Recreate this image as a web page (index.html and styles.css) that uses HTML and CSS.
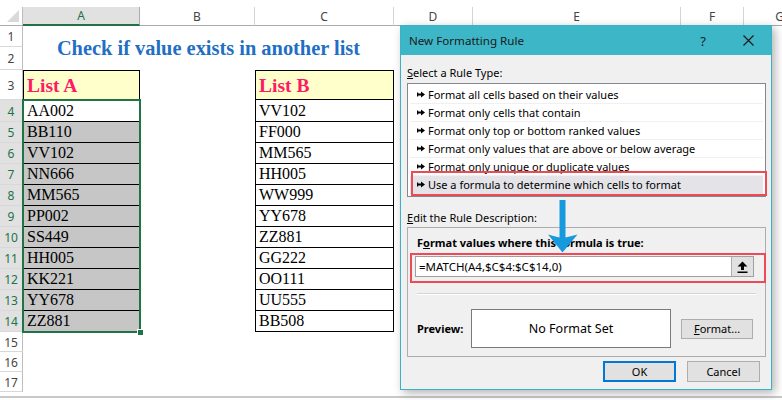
FILE: index.html
```html
<!DOCTYPE html>
<html>
<head>
<meta charset="utf-8">
<link rel="stylesheet" href="styles.css">
</head>
<body>
<div class="sheet">
  <div class="grid">
    <div class="corner"><svg width="14" height="13" viewBox="0 0 14 13"><polygon points="13,0 13,12 1,12" fill="#D9D9D9"/></svg></div>
    <div class="ch sel">A</div><div class="ch">B</div><div class="ch">C</div><div class="ch">D</div><div class="ch">E</div><div class="ch">F</div><div class="ch">G</div>

    <div class="rh">1</div>
    <div class="title">Check if value exists in another list</div>
    <div class="rh">2</div>
    <div class="rh">3</div>
    <div class="cell a hdr first">List A</div>
    <div class="cell c hdr first">List B</div>

    <div class="rh on">4</div><div class="cell a">AA002</div><div class="cell c">VV102</div>
    <div class="rh on">5</div><div class="cell a shade">BB110</div><div class="cell c">FF000</div>
    <div class="rh on">6</div><div class="cell a shade">VV102</div><div class="cell c">MM565</div>
    <div class="rh on">7</div><div class="cell a shade">NN666</div><div class="cell c">HH005</div>
    <div class="rh on">8</div><div class="cell a shade">MM565</div><div class="cell c">WW999</div>
    <div class="rh on">9</div><div class="cell a shade">PP002</div><div class="cell c">YY678</div>
    <div class="rh on">10</div><div class="cell a shade">SS449</div><div class="cell c">ZZ881</div>
    <div class="rh on">11</div><div class="cell a shade">HH005</div><div class="cell c">GG222</div>
    <div class="rh on">12</div><div class="cell a shade">KK221</div><div class="cell c">OO111</div>
    <div class="rh on">13</div><div class="cell a shade">YY678</div><div class="cell c">UU555</div>
    <div class="rh on">14</div><div class="cell a shade">ZZ881</div><div class="cell c">BB508</div>
    <div class="rh">15</div>
    <div class="rh">16</div>
    <div class="rh">17</div>

    <div class="selbox"><span class="handle"></span></div>
  </div>
  <div class="sheet-end"></div>
</div>

<div class="dialog">
  <div class="titlebar">
    <span class="dtitle">New Formatting Rule</span>
    <span class="help">?</span>
    <span class="close"><svg width="11" height="11" viewBox="0 0 11 11"><path d="M0.5 0.5 L10.5 10.5 M10.5 0.5 L0.5 10.5" stroke="#1a1a1a" stroke-width="1.2"/></svg></span>
  </div>
  <div class="dbody">
    <div class="lbl"><u>S</u>elect a Rule Type:</div>
    <div class="listbox">
      <div class="item"><svg class="bullet" width="8" height="7" viewBox="0 0 8 7"><path d="M0 2.5 H4 V0.5 L8 3.5 L4 6.5 V4.5 H0 Z" fill="#000"/><rect x="0" y="1.5" width="1.2" height="4" fill="#000"/></svg>Format all cells based on their values</div>
      <div class="item"><svg class="bullet" width="8" height="7" viewBox="0 0 8 7"><path d="M0 2.5 H4 V0.5 L8 3.5 L4 6.5 V4.5 H0 Z" fill="#000"/><rect x="0" y="1.5" width="1.2" height="4" fill="#000"/></svg>Format only cells that contain</div>
      <div class="item"><svg class="bullet" width="8" height="7" viewBox="0 0 8 7"><path d="M0 2.5 H4 V0.5 L8 3.5 L4 6.5 V4.5 H0 Z" fill="#000"/><rect x="0" y="1.5" width="1.2" height="4" fill="#000"/></svg>Format only top or bottom ranked values</div>
      <div class="item"><svg class="bullet" width="8" height="7" viewBox="0 0 8 7"><path d="M0 2.5 H4 V0.5 L8 3.5 L4 6.5 V4.5 H0 Z" fill="#000"/><rect x="0" y="1.5" width="1.2" height="4" fill="#000"/></svg>Format only values that are above or below average</div>
      <div class="item"><svg class="bullet" width="8" height="7" viewBox="0 0 8 7"><path d="M0 2.5 H4 V0.5 L8 3.5 L4 6.5 V4.5 H0 Z" fill="#000"/><rect x="0" y="1.5" width="1.2" height="4" fill="#000"/></svg>Format only unique or duplicate values</div>
      <div class="item sel"><svg class="bullet" width="8" height="7" viewBox="0 0 8 7"><path d="M0 2.5 H4 V0.5 L8 3.5 L4 6.5 V4.5 H0 Z" fill="#000"/><rect x="0" y="1.5" width="1.2" height="4" fill="#000"/></svg>Use a formula to determine which cells to format<span class="hl"></span></div>
    </div>
    <div class="lbl lbl2"><u>E</u>dit the Rule Description:</div>
    <div class="desc">
      <div class="blbl">F<u>o</u>rmat values where this formula is true:</div>
      <div class="formula-hl">
        <div class="input">
          <span class="ftext">=MATCH(A4,$C$4:$C$14,0)</span>
          <span class="refbtn"><svg width="11" height="12" viewBox="0 0 11 12"><path d="M5.5 0.5 L10.5 5.5 H7 V9 H4 V5.5 H0.5 Z" fill="#000"/><rect x="0.5" y="10.5" width="10" height="1.5" fill="#000"/></svg></span>
        </div>
      </div>
      <div class="sep"></div>
      <div class="prow">
        <span class="plbl">Preview:</span>
        <div class="pbox">No Format Set</div>
        <div class="btn fmt"><u>F</u>ormat...</div>
      </div>
    </div>
    <div class="btns">
      <div class="btn ok">OK</div>
      <div class="btn">Cancel</div>
    </div>
  </div>
  <svg class="arrow" width="30" height="53" viewBox="0 0 30 53"><path d="M11.5 0 H17.5 V37.5 Q22 36.5 29.5 34.5 L14.5 52.5 L0 34.5 Q7 36.5 11.5 37.5 Z" fill="#1799DD"/></svg>
</div>
</body>
</html>
```

FILE: styles.css
```css
html, body {
  margin: 0;
  padding: 0;
  background: #fff;
}
body {
  width: 782px;
  height: 400px;
  overflow: hidden;
  position: relative;
}

/* ---------- spreadsheet ---------- */
.sheet {
  width: 782px;
  padding-top: 7px;
  overflow: hidden;
}
.grid {
  position: relative;
  display: grid;
  grid-template-columns: 23px 117px 115px 139px 79px 208px 63px 72px;
  grid-template-rows: 19px 21px 23px 30px 22px repeat(10, 21px) 20px 20px 20px;
  font-family: "Liberation Serif", "Times New Roman", serif;
}
.corner {
  border-right: 1px solid #BDBDBD;
  border-bottom: 1px solid #ABABAB;
  box-sizing: border-box;
  display: flex;
  align-items: flex-end;
  justify-content: flex-end;
  padding: 0 2px 2px 0;
}
.ch {
  box-sizing: border-box;
  border-right: 1px solid #D4D4D4;
  border-bottom: 1px solid #ABABAB;
  font-family: "Noto Sans", "DejaVu Sans", sans-serif;
  font-size: 12px;
  color: #444;
  display: flex;
  align-items: center;
  justify-content: center;
}
.ch.sel {
  background: #E1E1E1;
  color: #217346;
  border-bottom: 2px solid #217346;
  border-right-color: #ABABAB;
}
.rh {
  grid-column: 1;
  box-sizing: border-box;
  border-right: 1px solid #BDBDBD;
  border-bottom: 1px solid #D8D8D8;
  font-family: "Noto Sans", "DejaVu Sans", sans-serif;
  font-size: 12px;
  color: #444;
  display: flex;
  align-items: center;
  justify-content: center;
  padding-top: 1px;
}
.rh.on {
  background: #E1E1E1;
  color: #217346;
}
.title {
  grid-column: 2 / 5;
  grid-row: span 2;
  display: flex;
  align-items: center;
  justify-content: center;
  font-weight: bold;
  font-size: 20.4px;
  color: #1F6FC5;
  padding-top: 1px;
}
.cell {
  box-sizing: border-box;
  border: 1px solid #000;
  border-top: none;
  display: flex;
  align-items: flex-end;
  padding: 0 0 1px 3px;
  font-size: 16px;
  line-height: 18px;
  color: #000;
}
.cell.a { grid-column: 2; }
.cell.c { grid-column: 4; }
.cell.first { border-top: 1px solid #000; }
.cell.shade { background: #C6C6C6; }
.cell.hdr {
  background: #FFFFCC;
  color: #FF1A66;
  font-weight: bold;
  font-size: 19.5px;
  line-height: 22px;
  padding-bottom: 2px;
}
.selbox {
  position: absolute;
  grid-column: 2 / 3;
  grid-row: 5 / 16;
  top: -1px;
  left: -1px;
  right: -1px;
  bottom: -1px;
  border: 2px solid #217346;
}
.handle {
  position: absolute;
  right: -5px;
  bottom: -5px;
  width: 5px;
  height: 5px;
  background: #217346;
  border: 1px solid #fff;
}
.sheet-end {
  margin-top: 4px;
  height: 2px;
  background: #C8C8C8;
}

/* ---------- dialog ---------- */
.dialog {
  position: absolute;
  left: 400px;
  top: 25px;
  width: 372px;
  height: 365px;
  box-sizing: border-box;
  border: 1px solid #38B2C4;
  background: #F0F0F0;
  box-shadow: 3px 3px 9px rgba(0, 0, 0, 0.3);
  font-family: "Noto Sans", "DejaVu Sans", sans-serif;
  font-size: 11px;
  color: #000;
}
.titlebar {
  height: 29px;
  background: #3DB6C7;
  display: flex;
  align-items: center;
  padding-left: 8px;
  font-size: 11.6px;
  color: #1a1a1a;
}
.help {
  margin-left: auto;
  width: 24px;
  text-align: center;
  font-size: 13px;
}
.close {
  width: 30px;
  margin-left: 18px;
  margin-right: 8px;
  display: flex;
  justify-content: center;
}
.dbody {
  padding: 0 5px 0 6px;
}
.lbl {
  margin-top: 9px;
  height: 18px;
  line-height: 18px;
}
.lbl2 {
  margin-top: 12px;
}
.listbox {
  margin-top: 1px;
  height: 114px;
  box-sizing: border-box;
  border: 1px solid #828790;
  background: #fff;
  padding-top: 2px;
}
.item {
  position: relative;
  height: 18px;
  margin: 0 2px;
  padding-left: 7px;
  box-sizing: border-box;
  border-bottom: 1px solid #F0F0F0;
  display: flex;
  align-items: center;
  gap: 3px;
  white-space: nowrap;
}
.item.sel {
  background: #E3E3E8;
  border-bottom-color: transparent;
}
.hl {
  position: absolute;
  top: -5px;
  bottom: -3px;
  left: 1px;
  right: -4px;
  border: 2px solid #EE4A56;
}
.desc {
  height: 130px;
  box-sizing: border-box;
  border: 1px solid #ADADAD;
  padding-top: 6px;
}
.blbl {
  font-weight: bold;
  height: 18px;
  line-height: 18px;
  padding-left: 9px;
  white-space: nowrap;
}
.formula-hl {
  margin: 1px 0 0 2px;
  width: 356px;
  height: 30px;
  box-sizing: border-box;
  border: 2px solid #EE4A56;
  padding: 1px 0 0 3px;
}
.input {
  width: 339px;
  height: 21px;
  box-sizing: border-box;
  border: 1px solid #A0A0A0;
  background: #fff;
  display: flex;
}
.ftext {
  flex: 1;
  padding-left: 3px;
  line-height: 19px;
  font-size: 11.5px;
}
.refbtn {
  width: 21px;
  background: #E1E1E1;
  border-left: 1px solid #ADADAD;
  display: flex;
  align-items: center;
  justify-content: center;
}
.sep {
  margin: 10px 9px 0 9px;
  border-top: 1px solid #D5D5D5;
  border-bottom: 1px solid #fff;
}
.prow {
  display: flex;
  align-items: center;
  margin-top: 14px;
  padding-left: 9px;
}
.plbl {
  width: 54px;
  font-weight: bold;
}
.pbox {
  width: 200px;
  height: 39px;
  box-sizing: border-box;
  border: 1px solid #7A7A7A;
  background: #fff;
  display: flex;
  align-items: center;
  justify-content: center;
  font-size: 12.5px;
}
.btn {
  box-sizing: border-box;
  border: 1px solid #ADADAD;
  background: #E1E1E1;
  display: flex;
  align-items: center;
  justify-content: center;
  width: 73px;
  height: 21px;
}
.fmt {
  margin-left: 10px;
  width: 72px;
  height: 20px;
}
.btns {
  display: flex;
  justify-content: flex-end;
  gap: 11px;
  margin-top: 4px;
  padding-right: 6px;
}
.ok {
  border: 2px solid #0078D7;
}
.arrow {
  position: absolute;
  left: 147px;
  top: 174px;
}
```
